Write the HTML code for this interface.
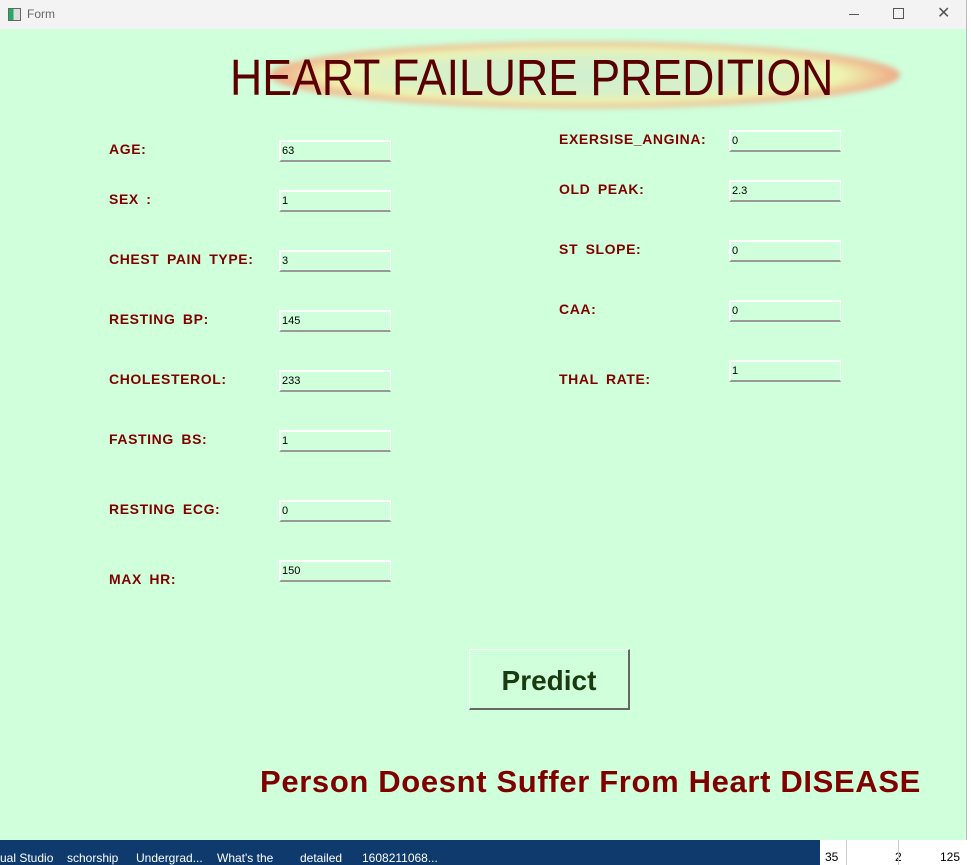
<!DOCTYPE html>
<html><head><style>
body{margin:0;width:971px;height:865px;position:relative;overflow:hidden;background:#f0f0f0;font-family:"Liberation Sans",sans-serif}
.abs{position:absolute}
.win{left:0;top:0;width:966px;height:840px;background:#d0ffdc;border-right:1px solid #bbb}
.tb{left:0;top:0;width:966px;height:29px;background:#f3f3f3}
.lbl{position:absolute;color:#800000;font-weight:bold;font-size:14px;letter-spacing:0.6px;word-spacing:3px;white-space:nowrap}
.in{position:absolute;width:108px;height:18px;border-top:2px solid #fff;border-left:2px solid #fff;border-bottom:2px solid #999;border-right:1px solid #fff;font-size:11px;line-height:18px;padding-left:1px;box-sizing:content-box;color:#000}
.task{left:0;top:840px;width:820px;height:25px;background:#0e3a6e;color:#fff;font-size:12px}
</style></head><body>
<div class="abs" style="left:966px;top:0;width:5px;height:865px;background:#fff"></div>
<div class="abs task">
<span class="abs" style="left:0;top:11px">ual Studio</span>
<span class="abs" style="left:67px;top:11px">schorship</span>
<span class="abs" style="left:136px;top:11px">Undergrad...</span>
<span class="abs" style="left:217px;top:11px">What's the</span>
<span class="abs" style="left:300px;top:11px">detailed</span>
<span class="abs" style="left:362px;top:11px">1608211068...</span>
</div>
<div class="abs" style="left:820px;top:840px;width:151px;height:25px;background:#fff;font-size:12px">
<span class="abs" style="left:5px;top:10px">35</span><span class="abs" style="left:75px;top:10px">2</span><span class="abs" style="left:120px;top:10px">125</span>
<div class="abs" style="left:26px;top:0;width:1px;height:25px;background:#ccc"></div>
<div class="abs" style="left:78px;top:0;width:1px;height:25px;background:#ccc"></div>
</div>
<div class="abs win"></div>
<div class="abs tb">
<div class="abs" style="left:8px;top:8px;width:11px;height:11px;border:1px solid #666;background:linear-gradient(90deg,#2a6 0 40%,#ddd 40%)"></div>
<span class="abs" style="left:27px;top:7px;font-size:12px;color:#666">Form</span>
<div class="abs" style="left:849px;top:14px;width:10px;height:1px;background:#555"></div>
<div class="abs" style="left:893px;top:8px;width:9px;height:9px;border:1px solid #555"></div>
<span class="abs" style="left:937px;top:3px;font-size:16px;color:#555">✕</span>
</div>
<div class="abs" style="left:270px;top:42px;width:630px;height:66px;border-radius:50%;filter:blur(3px);background:radial-gradient(ellipse at center,#d0f0d0 0%,#d8f0c8 40%,#eef4b0 58%,#f0a080 72%,#e89090 78%,#c8d8f0 88%,rgba(208,255,220,0) 100%)"></div>
<div class="abs" style="left:230px;top:50px;width:603px;height:60px;overflow:visible">
<div style="font-size:51px;color:#5a0000;white-space:nowrap;transform:scaleX(0.875);transform-origin:0 0;line-height:56px">HEART FAILURE PREDITION</div></div>

<div class="lbl" style="left:109px;top:141px">AGE:</div>
<div class="lbl" style="left:109px;top:191px">SEX :</div>
<div class="lbl" style="left:109px;top:251px">CHEST PAIN TYPE:</div>
<div class="lbl" style="left:109px;top:311px">RESTING BP:</div>
<div class="lbl" style="left:109px;top:371px">CHOLESTEROL:</div>
<div class="lbl" style="left:109px;top:431px">FASTING BS:</div>
<div class="lbl" style="left:109px;top:501px">RESTING ECG:</div>
<div class="lbl" style="left:109px;top:571px">MAX HR:</div>
<div class="in" style="left:279px;top:140px">63</div>
<div class="in" style="left:279px;top:190px">1</div>
<div class="in" style="left:279px;top:250px">3</div>
<div class="in" style="left:279px;top:310px">145</div>
<div class="in" style="left:279px;top:370px">233</div>
<div class="in" style="left:279px;top:430px">1</div>
<div class="in" style="left:279px;top:500px">0</div>
<div class="in" style="left:279px;top:560px">150</div>

<div class="lbl" style="left:559px;top:131px">EXERSISE_ANGINA:</div>
<div class="lbl" style="left:559px;top:181px">OLD PEAK:</div>
<div class="lbl" style="left:559px;top:241px">ST SLOPE:</div>
<div class="lbl" style="left:559px;top:301px">CAA:</div>
<div class="lbl" style="left:559px;top:371px">THAL RATE:</div>
<div class="in" style="left:729px;top:130px">0</div>
<div class="in" style="left:729px;top:180px">2.3</div>
<div class="in" style="left:729px;top:240px">0</div>
<div class="in" style="left:729px;top:300px">0</div>
<div class="in" style="left:729px;top:360px">1</div>

<div class="abs" style="left:469px;top:649px;width:158px;height:58px;border-top:1px solid #fff;border-left:1px solid #fff;border-right:2px solid #666;border-bottom:2px solid #666;color:#1a3a10;font-weight:bold;font-size:28px;text-align:center;line-height:62px">Predict</div>

<div class="abs" style="left:260px;top:764px;font-size:31px;font-weight:bold;color:#800000;white-space:nowrap;letter-spacing:0.65px">Person Doesnt Suffer From Heart DISEASE</div>
</body></html>
